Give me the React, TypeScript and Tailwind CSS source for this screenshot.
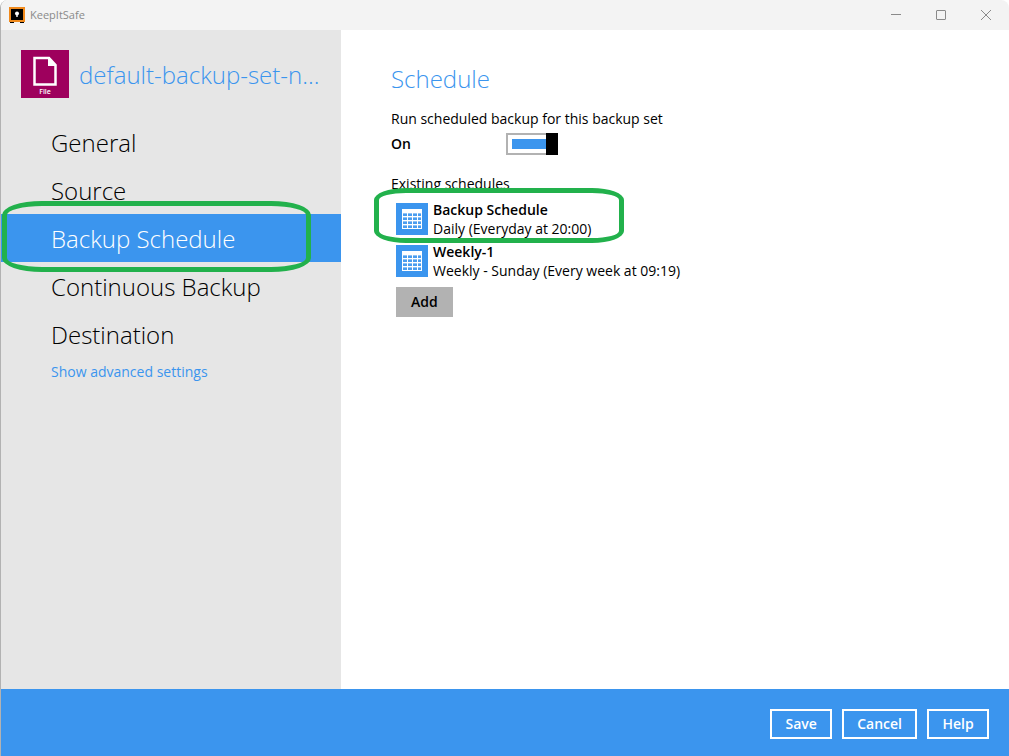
import { useState } from "react";

const NAV_ITEMS = ["General", "Source", "Backup Schedule", "Continuous Backup", "Destination"];

const SCHEDULES = [
  { name: "Backup Schedule", detail: "Daily (Everyday at 20:00)" },
  { name: "Weekly-1", detail: "Weekly - Sunday (Every week at 09:19)" },
];

const ACTIONS = ["Save", "Cancel", "Help"];

function SafeIcon() {
  return (
    <svg width="16" height="16" viewBox="0 0 16 16" aria-hidden="true">
      <rect width="16" height="15" fill="#f08a1d" />
      <rect x="2" y="2" width="12" height="11" fill="#000" />
      <path d="M1 15h4v1H1zM11 15h4v1h-4z" fill="#000" />
      <circle cx="8" cy="6.5" r="2" fill="#fff" />
      <path d="M7.3 7h1.4v3H7.3z" fill="#fff" />
    </svg>
  );
}

function FileIcon() {
  return (
    <svg className="h-8 w-6" viewBox="0 0 24 32" aria-hidden="true">
      <path d="M1.5 4h14.5l6.5 7v19.5h-21z" fill="none" stroke="#fff" strokeWidth="2.5" />
      <path d="M15 3.5v8.5h8.5z" fill="#fff" />
    </svg>
  );
}

function CalendarIcon() {
  return (
    <svg className="h-8 w-8 shrink-0 bg-[#3b95ee]" viewBox="0 0 32 32" aria-hidden="true">
      <rect x="6" y="6" width="20" height="20" fill="#fff" />
      {[10, 14, 18, 22].map((y) =>
        [7, 12, 17, 22].map((x) => (
          <g key={`${x}-${y}`}>
            <rect x={x} y={y} width={x === 22 ? 3 : 4} height="3" fill="#8fc2f5" />
            <rect x={x} y={y + 1} width={x === 22 ? 3 : 4} height="2" fill="#4a9def" />
          </g>
        ))
      )}
    </svg>
  );
}

function TitleBar() {
  return (
    <header className="flex h-[30px] items-center bg-[#f3f3f3] pr-px pl-2">
      <SafeIcon />
      <span className="ml-[5px] flex-1 text-[11px] text-[#8a8a8a]">KeepItSafe</span>
      <button type="button" aria-label="Minimize" className="flex h-full w-[45px] items-center justify-center">
        <svg width="10" height="10" viewBox="0 0 10 10" stroke="#8a8a8a">
          <path d="M0 4.5h10" />
        </svg>
      </button>
      <button type="button" aria-label="Maximize" className="flex h-full w-[45px] items-center justify-center">
        <svg width="10" height="10" viewBox="0 0 10 10" fill="none" stroke="#8a8a8a">
          <rect x="0.5" y="0.5" width="9" height="9" rx="0.5" />
        </svg>
      </button>
      <button type="button" aria-label="Close" className="flex h-full w-[45px] items-center justify-center">
        <svg width="10" height="10" viewBox="0 0 10 10" stroke="#8a8a8a">
          <path d="M0 0l10 10M10 0L0 10" />
        </svg>
      </button>
    </header>
  );
}

function Sidebar() {
  return (
    <aside className="w-[340px] shrink-0 bg-[#e6e6e6] pt-5">
      <div className="flex items-center gap-2.5 pl-5">
        <div className="flex h-12 w-12 shrink-0 flex-col items-center bg-[#9e005d] pt-1">
          <FileIcon />
          <span className="text-[7px] leading-[12px] font-semibold text-white">File</span>
        </div>
        <h1 className="pt-0.5 text-2xl font-light whitespace-nowrap text-[#3b95ee]">default-backup-set-n...</h1>
      </div>
      <nav className="mt-5">
        {NAV_ITEMS.map((item) => {
          const active = item === "Backup Schedule";
          return (
            <div key={item} className="relative">
              <a
                href="#"
                aria-current={active ? "page" : undefined}
                className={`flex h-12 items-center pt-0.5 pl-[50px] text-2xl font-light ${
                  active ? "bg-[#3b95ee] text-white" : "text-black"
                }`}
              >
                {item}
              </a>
              {active && (
                <span className="pointer-events-none absolute -top-[13px] right-[30px] -bottom-2.5 left-px z-10 rounded-[40px/14px] border-[5px] border-[#22b14c]" />
              )}
            </div>
          );
        })}
        <a href="#" className="mt-1 block pl-[50px] text-sm text-[#3b95ee]">
          Show advanced settings
        </a>
      </nav>
    </aside>
  );
}

function ScheduleToggle() {
  const [on, setOn] = useState(true);

  return (
    <div className="flex h-[22px] items-center">
      <label htmlFor="schedule-toggle" className="w-[115px] font-semibold">
        {on ? "On" : "Off"}
      </label>
      <input
        id="schedule-toggle"
        type="checkbox"
        role="switch"
        checked={on}
        onChange={(e) => setOn(e.target.checked)}
        className="flex h-[22px] w-[52px] appearance-none items-center border-2 border-r-0 border-[#b2b2b2] bg-white pl-1 before:h-2.5 before:flex-1 before:bg-[#b2b2b2] after:order-first after:h-[22px] after:w-3 after:bg-black checked:before:bg-[#3b95ee] checked:after:order-last"
      />
    </div>
  );
}

export default function App() {
  return (
    <div className="flex min-h-screen flex-col overflow-hidden rounded-t-lg border-l border-[#b2b2b2] bg-white font-['Open_Sans',sans-serif] text-sm text-black">
      <TitleBar />
      <div className="flex flex-1">
        <Sidebar />
        <main className="flex-1 px-[50px] pt-8">
          <h2 className="text-2xl leading-[34px] font-light text-[#3b95ee]">Schedule</h2>
          <p className="mt-[13px] mb-1">Run scheduled backup for this backup set</p>
          <ScheduleToggle />
          <p className="mt-[19px]">Existing schedules</p>
          <ul className="relative mt-1.5 flex flex-col gap-1 pl-[5px]">
            {SCHEDULES.map((schedule) => (
              <li key={schedule.name} className="flex h-[38px] items-center gap-[5px]">
                <CalendarIcon />
                <div className="leading-[19px]">
                  <div className="font-semibold">{schedule.name}</div>
                  <div>{schedule.detail}</div>
                </div>
              </li>
            ))}
            <li className="pointer-events-none absolute -top-3 -left-[17px] h-[55px] w-[250px] rounded-[32px/12px] border-[5px] border-[#22b14c]" />
          </ul>
          <button type="button" className="mt-[7px] ml-[5px] h-[30px] bg-[#b2b2b2] px-[15px] font-semibold">
            Add
          </button>
        </main>
      </div>
      <footer className="flex justify-end gap-2.5 bg-[#3b95ee] px-5 pt-5 pb-[17px]">
        {ACTIONS.map((action) => (
          <button
            key={action}
            type="button"
            className="h-[30px] min-w-[62px] border-2 border-white px-[13px] font-semibold text-white"
          >
            {action}
          </button>
        ))}
      </footer>
    </div>
  );
}
